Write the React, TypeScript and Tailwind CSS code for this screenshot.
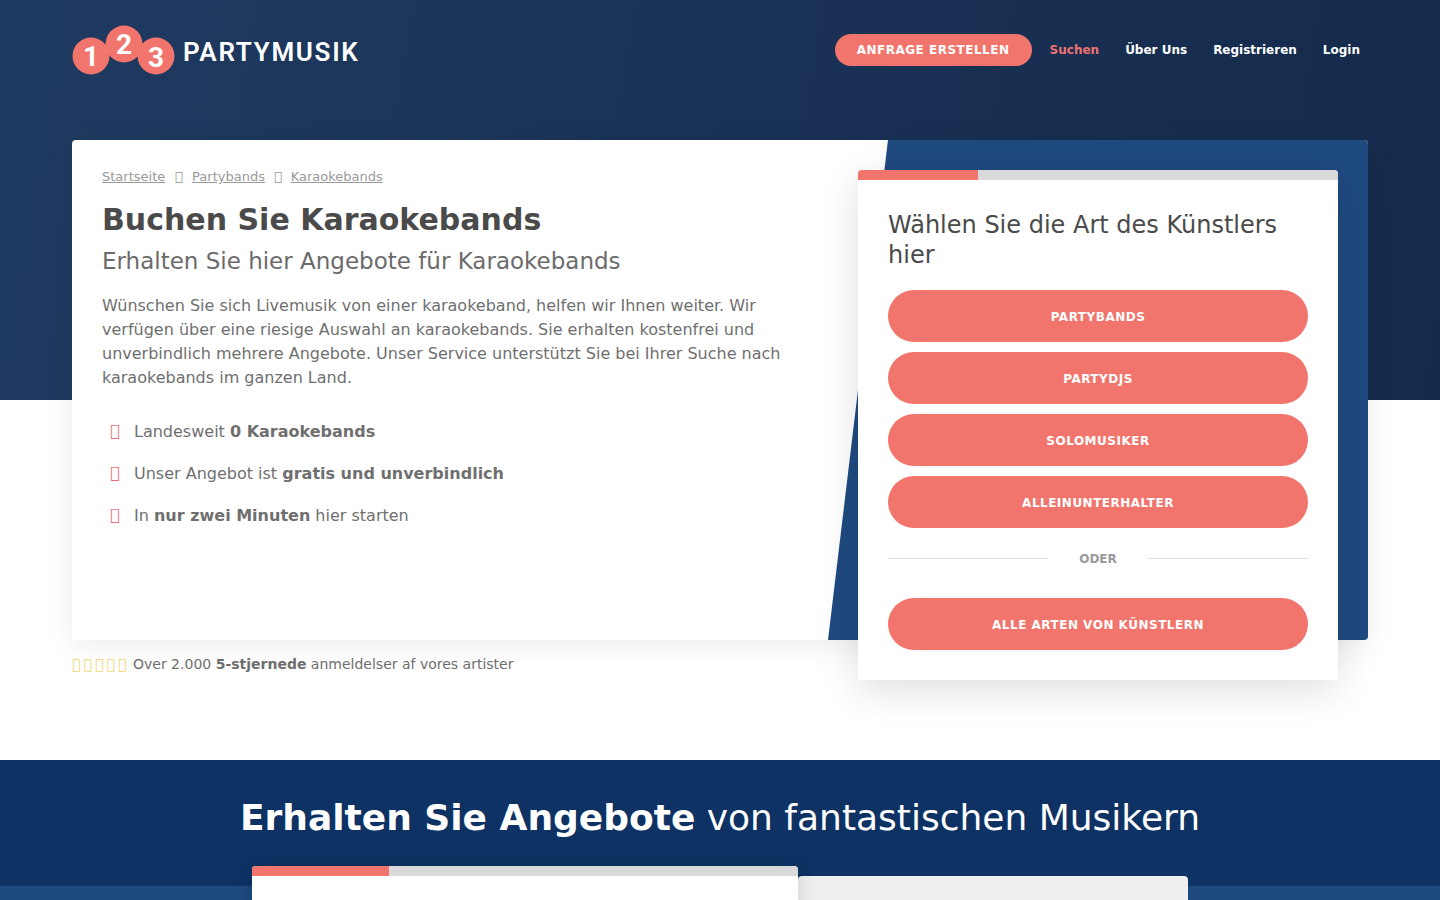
const font = { fontFamily: '"DejaVu Sans", sans-serif' };

function Logo() {
  return (
    <div className="flex items-center">
      <svg width="104" height="52" viewBox="0 0 104 52" className="block">
        <g fill="#f2756d">
          <circle cx="19" cy="32" r="18.5" />
          <circle cx="52" cy="20" r="18.5" />
          <circle cx="84" cy="32" r="18.5" />
        </g>
        <g fill="#fff" fontFamily="Roboto, sans-serif" fontWeight="700" fontSize="28" textAnchor="middle">
          <text x="19" y="42">1</text>
          <text x="52" y="30">2</text>
          <text x="84" y="43">3</text>
        </g>
      </svg>
      <span className="ml-[7px] mt-[4px] text-[26px] leading-none font-semibold tracking-[1.7px] text-white font-['Roboto',sans-serif]">
        PARTYMUSIK
      </span>
    </div>
  );
}

function Header() {
  return (
    <header className="flex h-[140px] items-start justify-between pl-[72px] pr-[80px] pt-[24px]">
      <Logo />
      <nav className="mt-[10px] flex items-center text-[12px] font-bold text-white">
        <a className="flex h-[32px] w-[197px] items-center justify-center rounded-full bg-[#f2756d] tracking-[0.5px]">
          ANFRAGE ERSTELLEN
        </a>
        <a className="ml-[18px] text-[#ee7272]">Suchen</a>
        <a className="ml-[26px]">Über Uns</a>
        <a className="ml-[26px]">Registrieren</a>
        <a className="ml-[26px]">Login</a>
      </nav>
    </header>
  );
}

function Tofu({ className }: { className: string }) {
  return <span className={className}>{'\uf00c'}</span>;
}

function Breadcrumb() {
  return (
    <div className="flex items-center text-[13px] leading-[14px] text-[#999]">
      <a className="underline">Startseite</a>
      <span className="mx-[9.5px]">{'\uf105'}</span>
      <a className="underline">Partybands</a>
      <span className="mx-[9px]">{'\uf105'}</span>
      <a className="underline">Karaokebands</a>
    </div>
  );
}

function Intro() {
  const items = [
    <>Landesweit <b>0 Karaokebands</b></>,
    <>Unser Angebot ist <b>gratis und unverbindlich</b></>,
    <>In <b>nur zwei Minuten</b> hier starten</>,
  ];
  return (
    <div className="w-[712px] pl-[30px] pt-[30px]">
      <Breadcrumb />
      <h1 className="mt-[18px] text-[30px] leading-[36px] font-bold text-[#4a4a4a]">Buchen Sie Karaokebands</h1>
      <h2 className="mt-[8px] text-[23px] leading-[30px] text-[#6b6b6b]">Erhalten Sie hier Angebote für Karaokebands</h2>
      <p className="mt-[18px] text-[16px] leading-[24px] text-[#6f6f6f]">
        Wünschen Sie sich Livemusik von einer karaokeband, helfen wir Ihnen weiter. Wir verfügen über eine riesige
        Auswahl an karaokebands. Sie erhalten kostenfrei und unverbindlich mehrere Angebote. Unser Service unterstützt
        Sie bei Ihrer Suche nach karaokebands im ganzen Land.
      </p>
      <ul className="mt-[30px] flex flex-col gap-[18px] text-[16px] leading-[24px] text-[#6f6f6f]">
        {items.map((item, i) => (
          <li key={i} className="flex items-center">
            <Tofu className="-mt-[2px] ml-[8px] mr-[14px] w-[10px] text-[#e8737a]" />
            <span>{item}</span>
          </li>
        ))}
      </ul>
    </div>
  );
}

function ArtistForm() {
  const kinds = ['PARTYBANDS', 'PARTYDJS', 'SOLOMUSIKER', 'ALLEINUNTERHALTER'];
  return (
    <div className="relative w-[480px] rounded-t-[4px] bg-white shadow-[0_10px_40px_rgba(0,0,0,0.13)]">
      <div className="h-[10px] overflow-hidden rounded-t-[4px] bg-[#d9d9d9]">
        <div className="h-full w-[120px] bg-[#f2756d]" />
      </div>
      <div className="px-[30px] pb-[30px] pt-[30px]">
        <h3 className="text-[24px] leading-[30px] text-[#4a4a4a]">Wählen Sie die Art des Künstlers hier</h3>
        <div className="mt-[20px] flex flex-col gap-[10px]">
          {kinds.map((k) => (
            <a key={k} className="flex h-[52px] items-center justify-center rounded-full bg-[#f2756d] pt-[2px] text-[12px] font-bold tracking-[0.5px] text-white">
              {k}
            </a>
          ))}
        </div>
        <div className="mt-[20px] flex h-[20px] items-center justify-between text-[12px] font-bold text-[#999]">
          <span className="h-px w-[160px] bg-[#ddd]" />
          <span className="pt-[2px]">ODER</span>
          <span className="h-px w-[160px] bg-[#ddd]" />
        </div>
        <a className="mt-[30px] flex h-[52px] items-center justify-center rounded-full bg-[#f2756d] pt-[2px] text-[12px] font-bold tracking-[0.5px] text-white">
          ALLE ARTEN VON KÜNSTLERN
        </a>
      </div>
    </div>
  );
}

function Hero() {
  return (
    <section className="px-[72px]">
      <div className="relative flex h-[500px] justify-between rounded-[4px] bg-white shadow-[0_5px_30px_rgba(0,0,0,0.08)]">
        <div className="absolute inset-y-0 right-0 w-[540px] rounded-r-[4px] bg-[#1f4a80] [clip-path:polygon(60px_0,100%_0,100%_100%,0_100%)]" />
        <Intro />
        <div className="relative mr-[30px] mt-[30px]">
          <ArtistForm />
        </div>
      </div>
      <div className="mt-[15px] flex items-center text-[14px] leading-[18px] text-[#6f6f6f]">
        <span className="w-[61px] text-[14px] tracking-[3.1px] text-[#f5d76e]">{'\uf005\uf005\uf005\uf005\uf005'}</span>
        <span>
          Over 2.000 <b>5-stjernede</b> anmeldelser af vores artister
        </span>
      </div>
    </section>
  );
}

function Offers() {
  return (
    <section className="relative mt-[87px] h-[140px] overflow-hidden bg-[#0d3263]">
      <div className="absolute inset-x-0 bottom-0 h-[14px] bg-[#1f4a80]" />
      <h2 className="relative pt-[35px] text-center text-[36px] leading-[46px] text-white">
        <b>Erhalten Sie Angebote</b> von fantastischen Musikern
      </h2>
      <div className="absolute left-[252px] top-[106px] flex items-start">
        <div className="z-10 w-[546px] overflow-hidden rounded-t-[4px] bg-white shadow-[0_5px_20px_rgba(0,0,0,0.15)]">
          <div className="h-[10px] bg-[#d9d9d9]">
            <div className="h-full w-[137px] bg-[#f2756d]" />
          </div>
          <div className="h-[30px]" />
        </div>
        <div className="mt-[10px] h-[40px] w-[390px] rounded-t-[4px] bg-[#efefef]" />
      </div>
    </section>
  );
}

export default function App() {
  return (
    <div className="relative h-[900px] overflow-hidden bg-white" style={font}>
      <div className="absolute inset-x-0 top-0 h-[400px] bg-[linear-gradient(100deg,#1f3a61,#152a4b)]" />
      <div className="relative">
        <Header />
        <Hero />
        <Offers />
      </div>
    </div>
  );
}
